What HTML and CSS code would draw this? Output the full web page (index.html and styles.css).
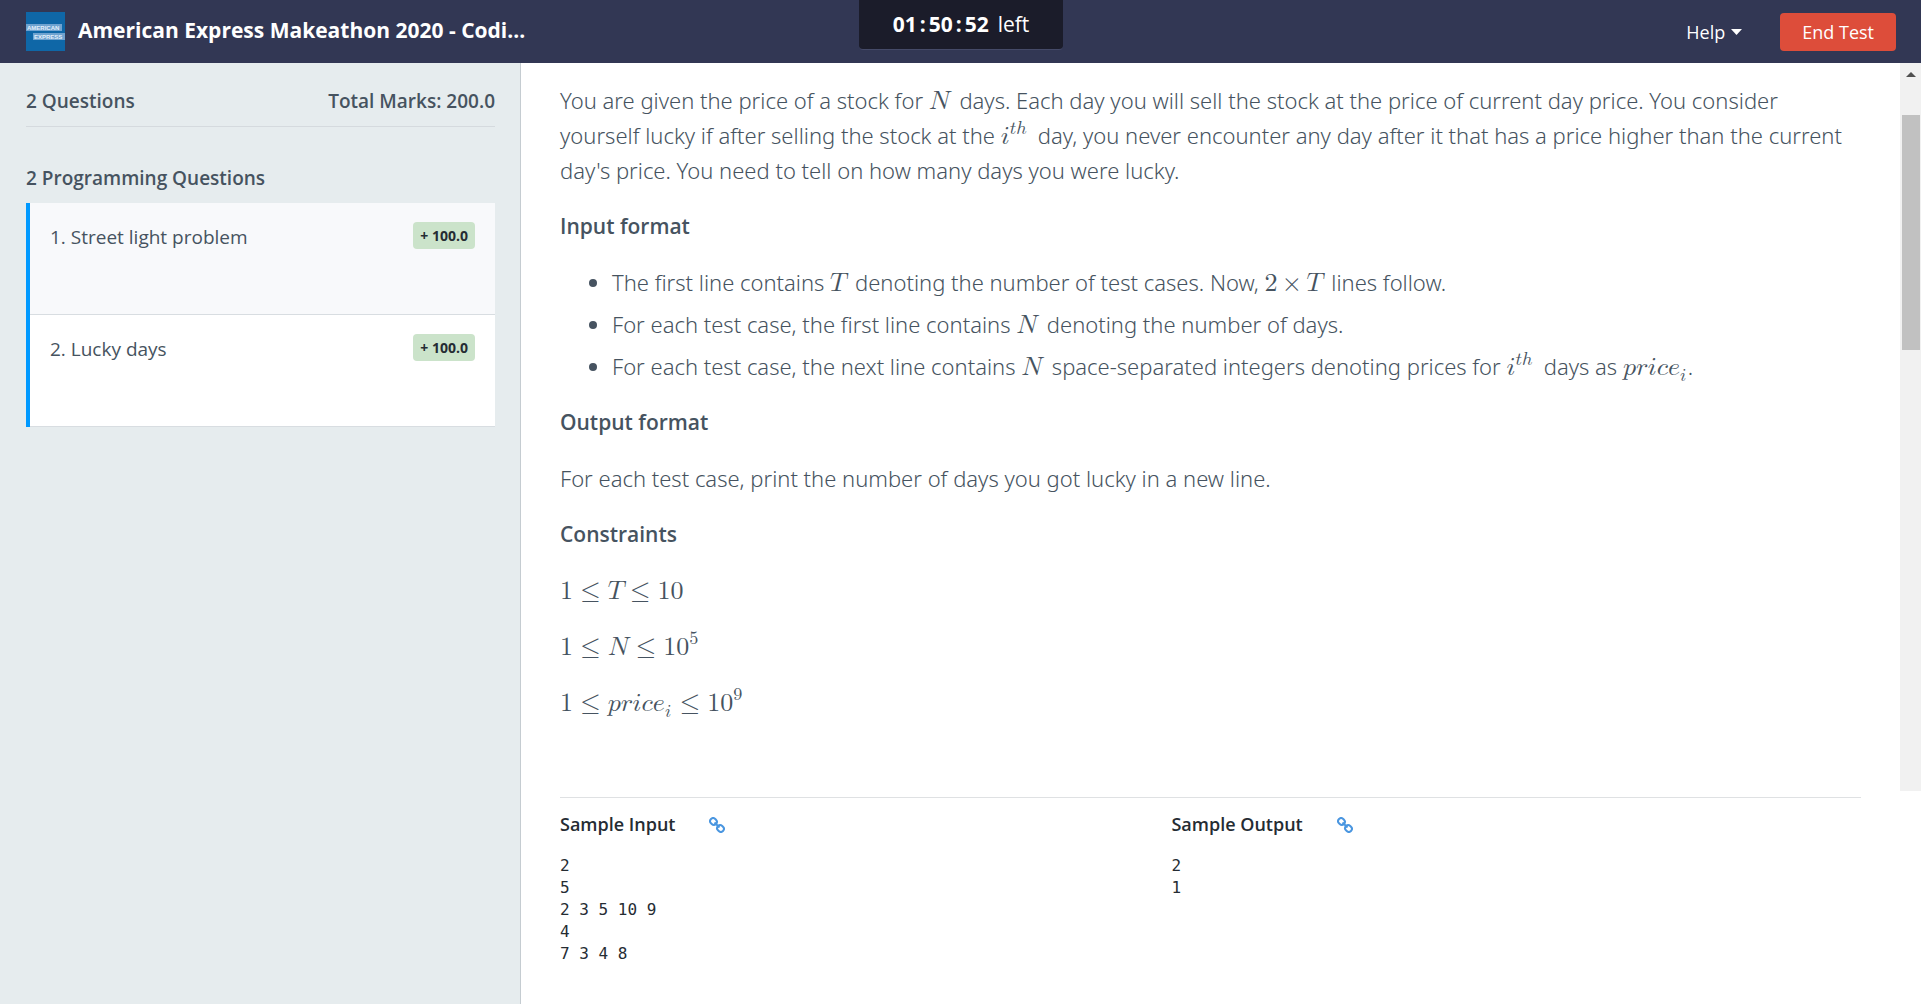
FILE: index.html
```html
<!DOCTYPE html>
<html lang="en">
<head>
<meta charset="utf-8">
<title>American Express Makeathon 2020 - Coding Test</title>
<link rel="stylesheet" href="styles.css">
</head>
<body>
<header class="topbar">
  <div class="brand">
    <svg class="logo" viewBox="0 0 39 39" role="img" aria-label="American Express">
      <rect width="39" height="39" fill="#0f67a7"/>
      <rect x="0" y="12" width="36" height="7" fill="#6fa3d0"/>
      <rect x="7" y="21" width="32" height="7" fill="#6fa3d0"/>
      <text class="logo-text" x="1" y="18" fill="#e4effa">AMERICAN</text>
      <text class="logo-text" x="8" y="27" fill="#e4effa">EXPRESS</text>
    </svg>
    <h1 class="title">American Express Makeathon 2020 - Codi...</h1>
  </div>
  <div class="timer"><b class="clock"><span>01</span><span>:</span><span>50</span><span>:</span><span>52</span></b><span>left</span></div>
  <div class="actions">
    <button class="help" type="button">Help <svg class="caret" viewBox="0 0 11 6" aria-hidden="true"><path d="M0 0h11L5.500 6z" fill="currentColor"/></svg></button>
    <button class="end" type="button">End Test</button>
  </div>
</header>
<div class="layout">
  <aside class="sidebar">
    <div class="summary"><span>2 Questions</span><span>Total Marks: 200.0</span></div>
    <h2 class="group">2 Programming Questions</h2>
    <nav class="questions">
      <a class="question" href="#q1"><span>1. Street light problem</span><span class="badge">+ 100.0</span></a>
      <a class="question current" href="#q2"><span>2. Lucky days</span><span class="badge">+ 100.0</span></a>
    </nav>
  </aside>
  <main class="main">
    <div class="viewer">
      <article class="problem">
        <p>You are given the price of a stock for <math><mi>N</mi></math> days. Each day you will sell the stock at the price of current day price. You consider yourself lucky if after selling the stock at the <math><msup><mi>i</mi><mrow><mi>t</mi><mi>h</mi></mrow></msup></math> day, you never encounter any day after it that has a price higher than the current day's price. You need to tell on how many days you were lucky.</p>
        <h3>Input format</h3>
        <ul>
          <li>The first line contains <math><mi>T</mi></math> denoting the number of test cases. Now, <math><mn>2</mn><mo>×</mo><mi>T</mi></math> lines follow.</li>
          <li>For each test case, the first line contains <math><mi>N</mi></math> denoting the number of days.</li>
          <li>For each test case, the next line contains <math><mi>N</mi></math> space-separated integers denoting prices for <math><msup><mi>i</mi><mrow><mi>t</mi><mi>h</mi></mrow></msup></math> days as <math class="last"><mi>p</mi><mi>r</mi><mi>i</mi><mi>c</mi><msub><mi>e</mi><mi>i</mi></msub></math>.</li>
        </ul>
        <h3>Output format</h3>
        <p>For each test case, print the number of days you got lucky in a new line.</p>
        <h3>Constraints</h3>
        <p><math><mn>1</mn><mo>≤</mo><mi>T</mi><mo>≤</mo><mn>10</mn></math></p>
        <p><math><mn>1</mn><mo>≤</mo><mi>N</mi><mo>≤</mo><msup><mn>10</mn><mn>5</mn></msup></math></p>
        <p><math><mn>1</mn><mo>≤</mo><mi>p</mi><mi>r</mi><mi>i</mi><mi>c</mi><msub><mi>e</mi><mi>i</mi></msub><mo>≤</mo><msup><mn>10</mn><mn>9</mn></msup></math></p>
      </article>
      <div class="scrollbar" aria-hidden="true">
        <svg class="arrow" viewBox="0 0 10 5"><path d="M0 5L5 0l5 5z" fill="#505050"/></svg>
        <div class="thumb"></div>
      </div>
    </div>
    <section class="samples">
      <div class="sample">
        <h4>Sample Input <a class="link" href="#input" aria-label="Sample input file"><svg viewBox="0 0 16 16" fill="none" stroke="#4a96e0" stroke-width="2"><rect x="-3.500" y="-3" width="7" height="6" rx="3" transform="translate(4.500 4.500) rotate(45)"/><rect x="-3.500" y="-3" width="7" height="6" rx="3" transform="translate(11.500 11.500) rotate(45)"/><path d="M5.500 5.500l5 5"/></svg></a></h4>
        <pre>2
5
2 3 5 10 9
4
7 3 4 8</pre>
      </div>
      <div class="sample">
        <h4>Sample Output <a class="link" href="#output" aria-label="Sample output file"><svg viewBox="0 0 16 16" fill="none" stroke="#4a96e0" stroke-width="2"><rect x="-3.500" y="-3" width="7" height="6" rx="3" transform="translate(4.500 4.500) rotate(45)"/><rect x="-3.500" y="-3" width="7" height="6" rx="3" transform="translate(11.500 11.500) rotate(45)"/><path d="M5.500 5.500l5 5"/></svg></a></h4>
        <pre>2
1</pre>
      </div>
    </section>
  </main>
</div>
</body>
</html>
```
FILE: styles.css
```css
* { box-sizing: border-box; }
body {
  margin: 0;
  min-height: 100vh;
  display: flex;
  flex-direction: column;
  font-family: "Open Sans", "Noto Sans", sans-serif;
  font-size: 19px;
  color: #465360;
  background: #fff;
}
h1, h2, h3, h4, p, ul, pre { margin: 0; }
button { font: inherit; border: 0; cursor: pointer; }

.topbar {
  display: grid;
  grid-template-columns: 1fr auto 1fr;
  height: 63px;
  padding: 0 25px 0 26px;
  background: #323754;
  color: #fff;
}
.brand { display: flex; align-items: center; gap: 13px; }
.logo { width: 39px; height: 39px; }
.logo-text { font: bold 6px "Liberation Sans", sans-serif; }
.title { padding-bottom: 4px; font-size: 21px; line-height: 30px; font-weight: 700; white-space: nowrap; }
.timer {
  align-self: start;
  display: flex;
  gap: 9px;
  height: 50px;
  padding: 0 34px;
  line-height: 48px;
  font-size: 21px;
  background: #1b1c2a;
  border-radius: 0 0 4px 4px;
  border-bottom: 1px solid #454a68;
}
.clock { display: flex; gap: 3px; }
.actions { display: flex; justify-content: flex-end; align-items: center; gap: 38px; }
.help { display: flex; align-items: center; gap: 6px; padding: 0; font-size: 18px; background: none; color: #fff; }
.caret { width: 11px; height: 6px; }
.end { height: 38px; padding: 0 22px; font-size: 18px; border-radius: 4px; background: #dd4d3a; color: #fff; }

.layout { flex: 1; display: flex; }
.sidebar {
  flex: 0 0 521px;
  padding: 21px 25px 0 26px;
  background: #e6ecee;
  border-right: 1px solid #c5ccd1;
}
.summary {
  display: flex;
  justify-content: space-between;
  padding: 4px 0 12px;
  line-height: 26px;
  font-weight: 600;
  border-bottom: 1px solid #d5dade;
}
.group { padding: 38px 0 12px; font-size: 19px; line-height: 26px; font-weight: 600; }
.questions { border-left: 4px solid #0099ff; }
.question {
  display: flex;
  justify-content: space-between;
  align-items: flex-start;
  height: 112px;
  padding: 19px 20px 0;
  line-height: 30px;
  color: #465360;
  text-decoration: none;
  background: #f8f9fb;
  border-bottom: 1px solid #d8dde1;
}
.question.current { background: #fff; }
.badge {
  padding: 0 7px;
  font-size: 14px;
  line-height: 27px;
  font-weight: 700;
  color: #252c33;
  background: #cbe3ca;
  border-radius: 4px;
}

.main { flex: 1; min-width: 0; }
.viewer { display: flex; }
.problem {
  flex: 1;
  display: flex;
  flex-direction: column;
  gap: 21px;
  padding: 20px 48px 71px 39px;
  font-family: "Noto Sans", "Open Sans", sans-serif;
  font-size: 22px;
  font-weight: 300;
  line-height: 35px;
}
.problem h3 { font-family: "Open Sans", sans-serif; font-size: 21px; font-weight: 600; }
.problem ul { display: flex; flex-direction: column; gap: 7px; padding-left: 52px; }
.problem math { margin-right: 4px; font-size: 26px; line-height: 20px; }
.problem .last { margin-right: 0; }

.scrollbar { flex: 0 0 21px; padding: 9px 1px 0 2px; background: #f1f1f1; }
.arrow { display: block; width: 10px; height: 5px; margin: 0 auto 38px; }
.thumb { height: 235px; background: #c1c1c1; }

.samples {
  display: grid;
  grid-template-columns: 47fr 53fr;
  margin: 6px 60px 0 39px;
  padding-top: 14px;
  border-top: 1px solid #dfe1e3;
  color: #252c33;
}
.sample h4 { display: flex; align-items: center; gap: 34px; font-size: 18px; line-height: 25px; font-weight: 600; }
.link { display: flex; }
.link svg { width: 16px; height: 16px; }
.sample pre { padding-top: 18px; font: 16px/22px "DejaVu Sans Mono", monospace; }
```
